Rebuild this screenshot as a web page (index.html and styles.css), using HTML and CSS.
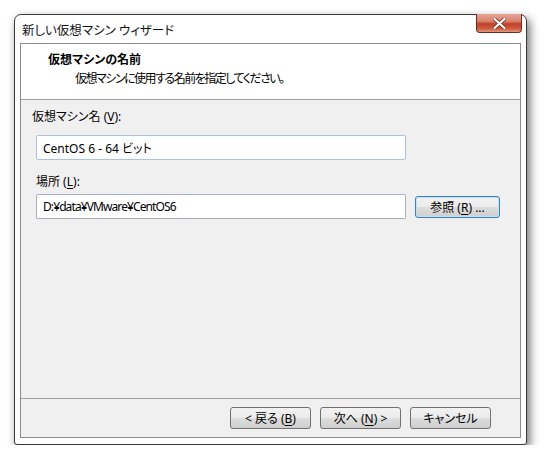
FILE: index.html
```html
<!DOCTYPE html>
<html lang="ja">
<head>
  <meta charset="UTF-8">
  <title>新しい仮想マシン ウィザード</title>
  <link rel="stylesheet" href="styles.css">
</head>
<body>
  <div class="window">
    <div class="titlebar">
      <span class="title">新しい仮想マシン ウィザード</span>
      <button class="close" title="閉じる">
        <svg width="13" height="11" viewBox="0 0 13 11">
          <path d="M1.5 1 L11.5 10 M11.5 1 L1.5 10" stroke="#6a2a20" stroke-width="3.6" stroke-linecap="round"/>
          <path d="M1.5 1 L11.5 10 M11.5 1 L1.5 10" stroke="#fff" stroke-width="2.2" stroke-linecap="round"/>
        </svg>
      </button>
    </div>

    <div class="client">
      <div class="header">
        <div class="heading">仮想マシンの名前</div>
        <div class="subheading">仮想マシンに使用する名前を指定してください。</div>
      </div>

      <div class="content">
        <div class="label first">仮想マシン名 (<u>V</u>):</div>
        <div class="row">
          <input class="field name" type="text" value="CentOS 6 - 64 ビット">
        </div>

        <div class="label">場所 (<u>L</u>):</div>
        <div class="row">
          <input class="field path" type="text" value="D:¥data¥VMware¥CentOS6">
          <button class="btn browse">参照 (<u>R</u>) ...</button>
        </div>
      </div>

      <div class="footer">
        <button class="btn">&lt; 戻る (<u>B</u>)</button>
        <button class="btn">次へ (<u>N</u>) &gt;</button>
        <button class="btn">キャンセル</button>
      </div>
    </div>
  </div>
</body>
</html>
```

FILE: styles.css
```css
body {
  margin: 0;
  background: #fff;
  font-family: "Noto Sans", "Noto Sans CJK JP", sans-serif;
  font-feature-settings: "palt";
  font-size: 12px;
  color: #000;
}

.window {
  width: 501px;
  height: 423px;
  margin: 14px 0 0 14px;
  border: 1px solid #3a3a3a;
  border-radius: 7px 7px 3px 3px;
  background: #fff;
  box-shadow: 3px 4px 10px rgba(0, 0, 0, 0.55);
  display: flex;
  flex-direction: column;
  padding: 0 5px 6px 5px;
  box-sizing: content-box;
}

.titlebar {
  height: 28px;
  display: flex;
  align-items: flex-start;
  position: relative;
}

.title {
  margin: 5px 0 0 2px;
  font-size: 12.5px;
  color: #111;
}

.close {
  position: absolute;
  right: -1px;
  top: -1px;
  width: 46px;
  height: 19px;
  border: 1px solid #6c2b22;
  border-top: none;
  border-radius: 0 0 4px 4px;
  background: linear-gradient(#e4a493 0%, #d88470 40%, #c0412b 55%, #cc5a3f 80%, #e29a7e 100%);
  display: flex;
  align-items: center;
  justify-content: center;
  padding: 0;
}

.client {
  flex: 1;
  border: 1px solid #8b8b8b;
  background: #f0f0f0;
  display: flex;
  flex-direction: column;
}

.header {
  height: 56px;
  background: #fff;
  border-bottom: 1px solid #a0a0a0;
  box-sizing: border-box;
  padding: 7px 0 0 27px;
}

.heading {
  font-weight: bold;
  line-height: 17px;
}

.subheading {
  margin: 3px 0 0 27px;
  line-height: 16px;
  letter-spacing: -1.5px;
}

.content {
  flex: 1;
  padding: 9px 0 0 11px;
}

.label {
  line-height: 16px;
  margin: 14px 0 4px 4px;
}

.label.first {
  margin: 0 0 10px 0;
}

.row {
  display: flex;
  align-items: center;
  gap: 9px;
  padding-left: 4px;
}

.field {
  width: 370px;
  height: 25px;
  box-sizing: border-box;
  border: 1px solid #abadb3;
  border-top-color: #a6b4c9;
  border-radius: 2px;
  background: #fff;
  font: inherit;
  padding: 0 6px;
  margin: 0;
  outline: none;
}

.field.name {
  border-color: #a9c4dd;
}

.field.path {
  letter-spacing: -0.9px;
}

.btn {
  width: 81px;
  height: 22px;
  box-sizing: border-box;
  border: 1px solid #707070;
  border-radius: 3px;
  background: linear-gradient(#f2f2f2 0%, #ebebeb 50%, #dddddd 51%, #cfcfcf 100%);
  font: inherit;
  color: #000;
  padding: 0;
  margin: 0;
}

.browse {
  width: 85px;
  border-color: #3c7fb1;
  box-shadow: inset 0 0 0 1px #bfe3f5;
  margin-top: 1px;
}

.footer {
  height: 39px;
  border-top: 1px solid #a0a0a0;
  display: flex;
  justify-content: flex-end;
  align-items: center;
  gap: 9px;
  padding: 0 29px 0 0;
  box-sizing: border-box;
}

u {
  text-decoration-thickness: 1px;
  text-underline-offset: 2px;
}
```
